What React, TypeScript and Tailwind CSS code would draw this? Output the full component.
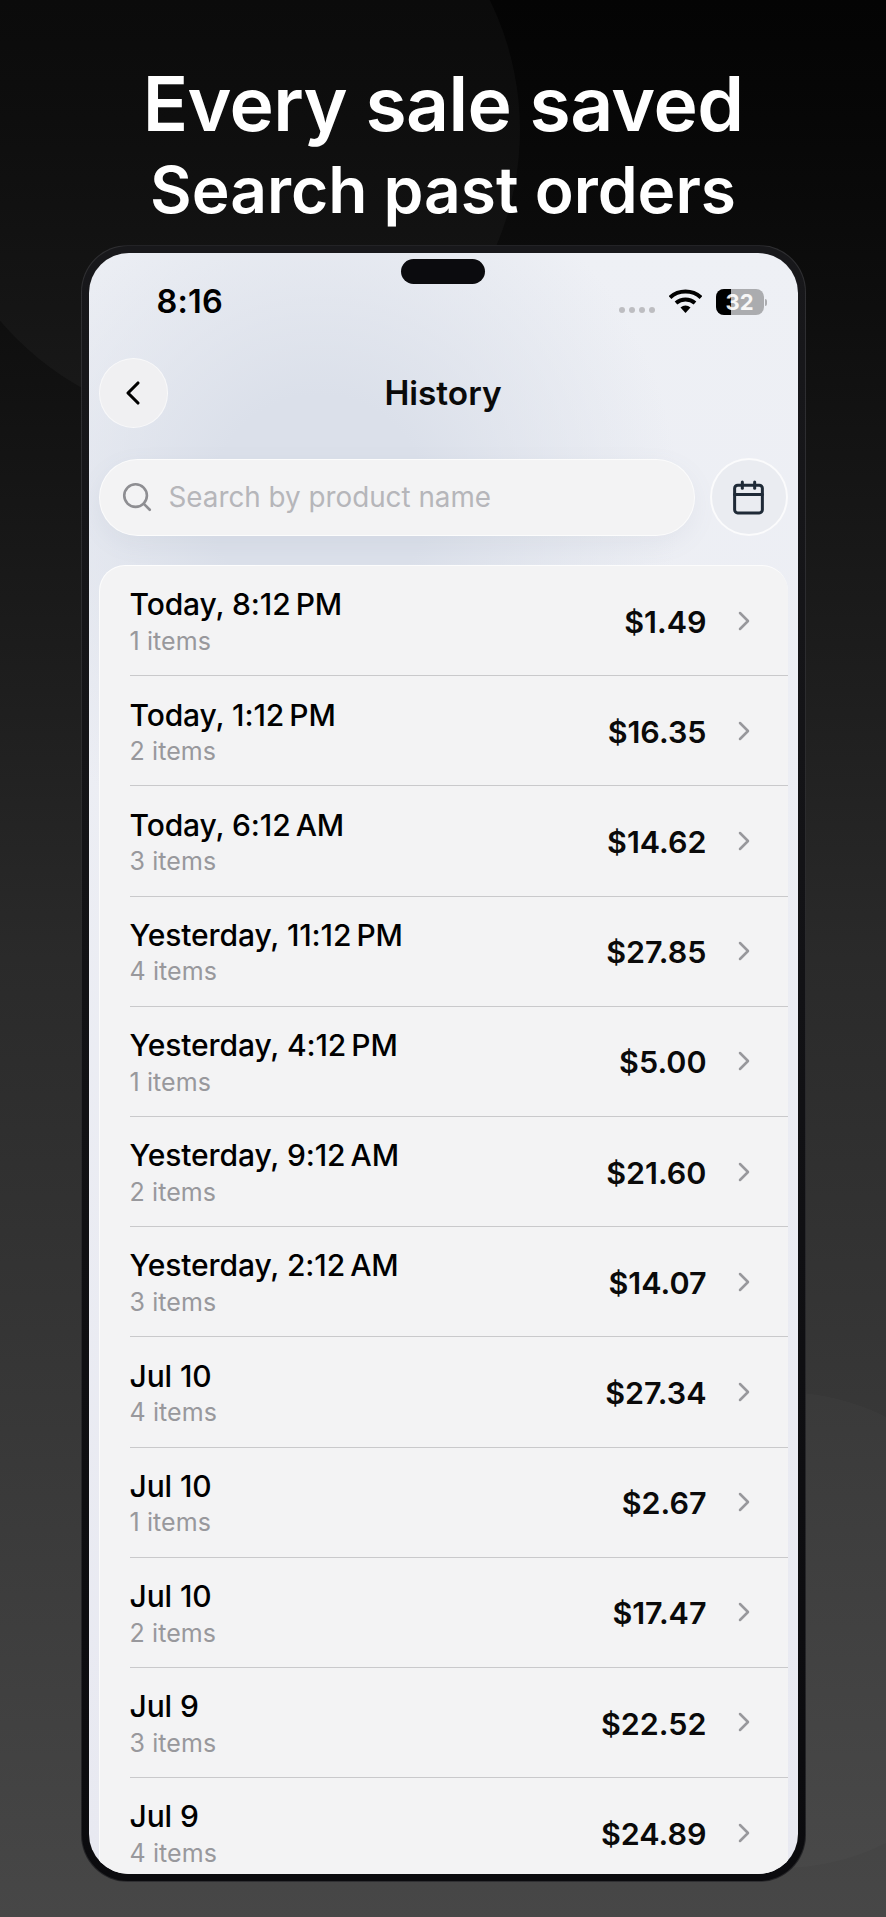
import React from 'react';
import { ChevronLeft, ChevronRight, Search, Calendar } from 'lucide-react';

const orders = [
  { date: 'Today, 8:12\u202FPM', items: 1, total: '$1.49' },
  { date: 'Today, 1:12\u202FPM', items: 2, total: '$16.35' },
  { date: 'Today, 6:12\u202FAM', items: 3, total: '$14.62' },
  { date: 'Yesterday, 11:12\u202FPM', items: 4, total: '$27.85' },
  { date: 'Yesterday, 4:12\u202FPM', items: 1, total: '$5.00' },
  { date: 'Yesterday, 9:12\u202FAM', items: 2, total: '$21.60' },
  { date: 'Yesterday, 2:12\u202FAM', items: 3, total: '$14.07' },
  { date: 'Jul 10', items: 4, total: '$27.34' },
  { date: 'Jul 10', items: 1, total: '$2.67' },
  { date: 'Jul 10', items: 2, total: '$17.47' },
  { date: 'Jul 9', items: 3, total: '$22.52' },
  { date: 'Jul 9', items: 4, total: '$24.89' },
];

const StatusBar = () => (
  <div className="h-[100px] pl-[68px] pr-[31px] pt-[30px] flex justify-between items-start">
    <span className="text-[32.5px] leading-[38px] font-semibold text-black tracking-[0.2px]">8:16</span>
    <div className="flex items-center mt-[6px]">
      <div className="flex gap-[4px] mt-[15px] mr-[14px]">
        <span className="w-[6px] h-[6px] rounded-full bg-[#bdbdc1]" />
        <span className="w-[6px] h-[6px] rounded-full bg-[#bdbdc1]" />
        <span className="w-[6px] h-[6px] rounded-full bg-[#bdbdc1]" />
        <span className="w-[6px] h-[6px] rounded-full bg-[#bdbdc1]" />
      </div>
      <svg width="33" height="25" viewBox="0 0 33 25" className="mr-[14px] -mt-[2px]">
        <path d="M1 8.5C9.5 0.5 23.5 0.5 32 8.5" fill="none" stroke="#000" strokeWidth="4" />
        <path d="M7 14C12.5 9.3 20.5 9.3 26 14" fill="none" stroke="#000" strokeWidth="4" />
        <path d="M11.5 18.5L16.5 24L21.5 18.5C18.5 15.8 14.5 15.8 11.5 18.5Z" fill="#000" />
      </svg>
      <div className="relative w-[48px] h-[26px] rounded-[8px] bg-[#abacaf] overflow-hidden flex items-center justify-center">
        <div className="absolute left-0 top-0 bottom-0 w-[15px] bg-black" />
        <span className="relative text-[22px] leading-none font-bold text-white/90">32</span>
      </div>
      <div className="w-[2px] h-[7px] ml-[1px] rounded-r-full bg-[#abacaf]" />
    </div>
  </div>
);

const OrderRow = ({ date, items, total }: { date: string; items: number; total: string }) => (
  <div className="ml-[30px] h-[110.2px] shrink-0 flex items-center justify-between border-b border-[#c9c9cb]">
    <div className="flex flex-col mt-[1px]">
      <span className="text-[30px] leading-[37px] font-medium text-black tracking-[-0.1px]">{date}</span>
      <span className="mt-[2.5px] text-[25px] leading-[30px] text-[#98989c] tracking-[0.1px]">{items} items</span>
    </div>
    <div className="flex items-center">
      <span className="mt-[2px] text-[30.5px] font-semibold text-[#0a0a0a]">{total}</span>
      <ChevronRight className="w-[32px] h-[32px] ml-[21px] mr-[28px] text-[#98989c]" strokeWidth={1.9} />
    </div>
  </div>
);

export default function App() {
  return (
    <div
      className="relative w-[886px] h-[1917px] overflow-hidden bg-gradient-to-b from-[#040404] via-[#2a2a2a] to-[#474747] flex flex-col items-center"
      style={{ fontFamily: 'Inter, "Liberation Sans", sans-serif' }}
    >
      {/* faint background circles */}
      <div className="absolute -left-[70px] -top-[165px] w-[590px] h-[590px] rounded-full bg-white/[0.03]" />
      <div className="absolute left-[542px] top-[1392px] w-[476px] h-[476px] rounded-full bg-white/[0.02]" />

      <h1 className="relative mt-[61px] text-[75px] leading-[86px] font-semibold text-white tracking-[-0.6px]">Every sale saved</h1>
      <h2 className="relative mt-[6px] text-[64px] leading-[74px] font-semibold text-white tracking-[0px]">Search past orders</h2>

      {/* phone */}
      <div className="relative mt-[18px] w-[725px] h-[1637px] rounded-[47px] bg-gradient-to-b from-[#18181b] to-[#0b0b0e] border border-white/10 p-[7px]">
        <div className="relative w-[709px] h-[1621px] rounded-[40px] overflow-hidden flex flex-col bg-gradient-to-b from-[#eef0f5] to-[#e8e9f1]">
          <div className="absolute -left-[130px] -top-[110px] w-[720px] h-[720px] rounded-full bg-[radial-gradient(closest-side,#dbe0ea_30%,transparent_100%)]" />
          <div className="absolute left-[312px] top-[6px] w-[84px] h-[25px] rounded-full bg-[#0b0b0e]" />

          <div className="relative flex flex-col h-full">
            <StatusBar />

            {/* header */}
            <div className="relative h-[70px] mt-[5px] px-[10px] flex items-center justify-center">
              <div className="absolute left-[10px] top-0 w-[69px] h-[70px] rounded-full bg-[#f0f0f2] border border-white/60 flex items-center justify-center">
                <ChevronLeft className="w-[40px] h-[40px] text-black" strokeWidth={1.9} />
              </div>
              <span className="text-[33.4px] font-semibold text-[#0a0a0a]">History</span>
            </div>

            {/* search */}
            <div className="mt-[30px] px-[10px] flex items-center justify-between">
              <div className="w-[596px] h-[77px] rounded-full bg-[#f3f3f4] border border-white/70 pl-[20px] flex items-center shadow-[0_8px_24px_rgba(120,130,150,0.08)]">
                <Search className="w-[34px] h-[34px] text-[#8e8e92] mr-[15px]" strokeWidth={1.85} />
                <span className="mt-[2px] text-[27.8px] text-[#b6b6ba]">Search by product name</span>
              </div>
              <div className="w-[78px] h-[78px] rounded-full bg-[#eaecf1] border-2 border-white/80 flex items-center justify-center">
                <Calendar className="w-[37px] h-[37px] text-[#1f2a37]" strokeWidth={1.95} />
              </div>
            </div>

            {/* list */}
            <div className="mt-[29px] mx-[10px] flex-1 flex flex-col overflow-hidden rounded-t-[26px] bg-[#f3f3f4] border-t border-l border-white/80">
              {orders.map((o, i) => (
                <OrderRow key={i} {...o} />
              ))}
            </div>
          </div>
        </div>
      </div>
    </div>
  );
}
